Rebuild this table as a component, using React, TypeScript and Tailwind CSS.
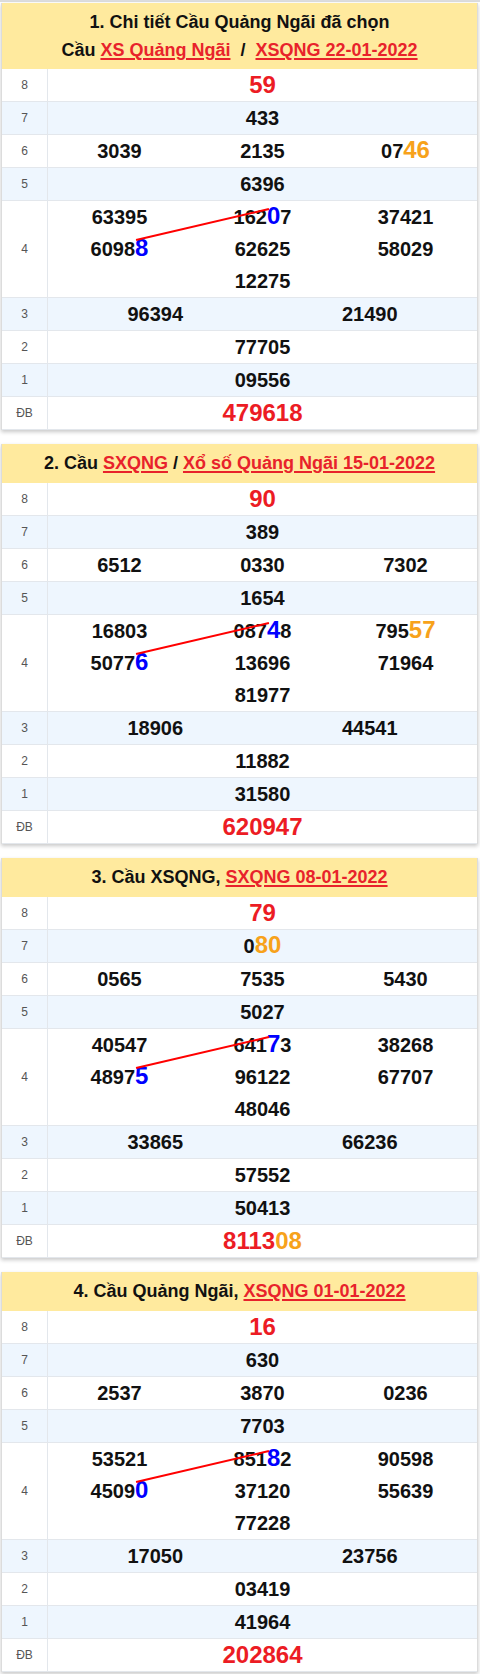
import React, { useLayoutEffect, useRef, useState } from 'react';

type Panel = {
  title: React.ReactNode;
  twoLine?: boolean;
  g8: string;
  g7: string;
  g6: string[];
  g5: string;
  g4: string[][];
  g3: string[];
  g2: string;
  g1: string;
  db: string;
};

const Link = ({ children }: { children: React.ReactNode }) => (
  <span className="text-[#e8222b] underline underline-offset-2 decoration-[1.5px]">{children}</span>
);

// "[..]" = orange highlight, "{..}" = blue highlight
const renderNum = (s: string, blueRef?: React.Ref<HTMLSpanElement>) => {
  const parts: React.ReactNode[] = [];
  const re = /(\[[^\]]+\]|\{[^}]+\})/g;
  let last = 0;
  let m: RegExpExecArray | null;
  let i = 0;
  while ((m = re.exec(s))) {
    if (m.index > last) parts.push(<span key={i++}>{s.slice(last, m.index)}</span>);
    const tok = m[0];
    if (tok[0] === '[') {
      parts.push(
        <span key={i++} className="text-[24px] leading-none text-[#f7a21b]">
          {tok.slice(1, -1)}
        </span>
      );
    } else {
      parts.push(
        <span key={i++} ref={blueRef} className="text-[24px] leading-none text-[#0000ff]">
          {tok.slice(1, -1)}
        </span>
      );
    }
    last = m.index + tok.length;
  }
  if (last < s.length) parts.push(<span key={i++}>{s.slice(last)}</span>);
  return parts;
};

const Row = ({
  label,
  blue,
  children,
}: {
  label: string;
  blue?: boolean;
  children: React.ReactNode;
}) => (
  <div className={`flex border-b border-[#e3e7ec] ${blue ? 'bg-[#eef6fe]' : 'bg-white'}`}>
    <div className="w-[46px] shrink-0 border-r border-[#e3e7ec] flex items-center justify-center text-[12px] text-[#555]">
      {label}
    </div>
    <div className="flex-1 text-[20px] font-bold leading-[32px] text-[#111]">{children}</div>
  </div>
);

const Prize4 = ({ cols }: { cols: string[][] }) => {
  const boxRef = useRef<HTMLDivElement>(null);
  const startRef = useRef<HTMLSpanElement>(null);
  const endRef = useRef<HTMLSpanElement>(null);
  const [line, setLine] = useState<{ x1: number; y1: number; x2: number; y2: number } | null>(null);

  useLayoutEffect(() => {
    if (!boxRef.current || !startRef.current || !endRef.current) return;
    const b = boxRef.current.getBoundingClientRect();
    const s = startRef.current.getBoundingClientRect();
    const e = endRef.current.getBoundingClientRect();
    setLine({
      x1: s.left - b.left + 1,
      y1: s.top - b.top + 6,
      x2: e.left - b.left + 2,
      y2: e.top - b.top + 7,
    });
  }, []);

  return (
    <div ref={boxRef} className="relative grid grid-cols-3 text-center">
      {cols.map((col, ci) => (
        <div key={ci} className="flex flex-col">
          {col.map((n, ni) => (
            <div key={ni} className="h-[32px]">
              {renderNum(n, ci === 0 ? startRef : ci === 1 ? endRef : undefined)}
            </div>
          ))}
        </div>
      ))}
      {line && (
        <svg className="absolute inset-0 w-full h-full pointer-events-none">
          <line x1={line.x1} y1={line.y1} x2={line.x2} y2={line.y2} stroke="#ff0000" strokeWidth="2" />
        </svg>
      )}
    </div>
  );
};

const Table = ({ p }: { p: Panel }) => (
  <div className="border-x border-[#dcdcdc] shadow-[0_2px_4px_rgba(0,0,0,0.22)]">
    <div
      className={`bg-[#ffea9e] text-center text-[18px] font-bold text-[#111] py-[5px] ${
        p.twoLine ? 'leading-[28px]' : 'leading-[29px]'
      }`}
    >
      {p.title}
    </div>
    <Row label="8">
      <div className="text-center text-[24px] text-[#ec1c24]">{p.g8}</div>
    </Row>
    <Row label="7" blue>
      <div className="text-center h-[32px]">{renderNum(p.g7)}</div>
    </Row>
    <Row label="6">
      <div className="grid grid-cols-3 text-center">
        {p.g6.map((n, i) => (
          <div key={i} className="h-[32px]">
            {renderNum(n)}
          </div>
        ))}
      </div>
    </Row>
    <Row label="5" blue>
      <div className="text-center">{p.g5}</div>
    </Row>
    <Row label="4">
      <Prize4 cols={p.g4} />
    </Row>
    <Row label="3" blue>
      <div className="grid grid-cols-2 text-center">
        {p.g3.map((n, i) => (
          <div key={i}>{n}</div>
        ))}
      </div>
    </Row>
    <Row label="2">
      <div className="text-center">{p.g2}</div>
    </Row>
    <Row label="1" blue>
      <div className="text-center">{p.g1}</div>
    </Row>
    <Row label="ĐB">
      <div className="text-center text-[24px] h-[32px] text-[#ec1c24]">{renderNum(p.db)}</div>
    </Row>
  </div>
);

const panels: Panel[] = [
  {
    twoLine: true,
    title: (
      <>
        <div>1. Chi tiết Cầu Quảng Ngãi đã chọn</div>
        <div>
          Cầu <Link>XS Quảng Ngãi</Link>&nbsp; / &nbsp;<Link>XSQNG 22-01-2022</Link>
        </div>
      </>
    ),
    g8: '59',
    g7: '433',
    g6: ['3039', '2135', '07[46]'],
    g5: '6396',
    g4: [
      ['63395', '6098{8}'],
      ['162{0}7', '62625', '12275'],
      ['37421', '58029'],
    ],
    g3: ['96394', '21490'],
    g2: '77705',
    g1: '09556',
    db: '479618',
  },
  {
    title: (
      <>
        2. Cầu <Link>SXQNG</Link> / <Link>Xổ số Quảng Ngãi 15-01-2022</Link>
      </>
    ),
    g8: '90',
    g7: '389',
    g6: ['6512', '0330', '7302'],
    g5: '1654',
    g4: [
      ['16803', '5077{6}'],
      ['087{4}8', '13696', '81977'],
      ['795[57]', '71964'],
    ],
    g3: ['18906', '44541'],
    g2: '11882',
    g1: '31580',
    db: '620947',
  },
  {
    title: (
      <>
        3. Cầu XSQNG, <Link>SXQNG 08-01-2022</Link>
      </>
    ),
    g8: '79',
    g7: '0[80]',
    g6: ['0565', '7535', '5430'],
    g5: '5027',
    g4: [
      ['40547', '4897{5}'],
      ['641{7}3', '96122', '48046'],
      ['38268', '67707'],
    ],
    g3: ['33865', '66236'],
    g2: '57552',
    g1: '50413',
    db: '8113[08]',
  },
  {
    title: (
      <>
        4. Cầu Quảng Ngãi, <Link>XSQNG 01-01-2022</Link>
      </>
    ),
    g8: '16',
    g7: '630',
    g6: ['2537', '3870', '0236'],
    g5: '7703',
    g4: [
      ['53521', '4509{0}'],
      ['851{8}2', '37120', '77228'],
      ['90598', '55639'],
    ],
    g3: ['17050', '23756'],
    g2: '03419',
    g1: '41964',
    db: '202864',
  },
];

export default function App() {
  return (
    <div className="w-[480px] bg-white font-['Liberation_Sans',Arial,sans-serif] border-t-2 border-[#dcdcdc] pt-[1px] pl-[1px] pr-[2px] pb-[2px] flex flex-col gap-[14px]">
      {panels.map((p, i) => (
        <Table key={i} p={p} />
      ))}
    </div>
  );
}
